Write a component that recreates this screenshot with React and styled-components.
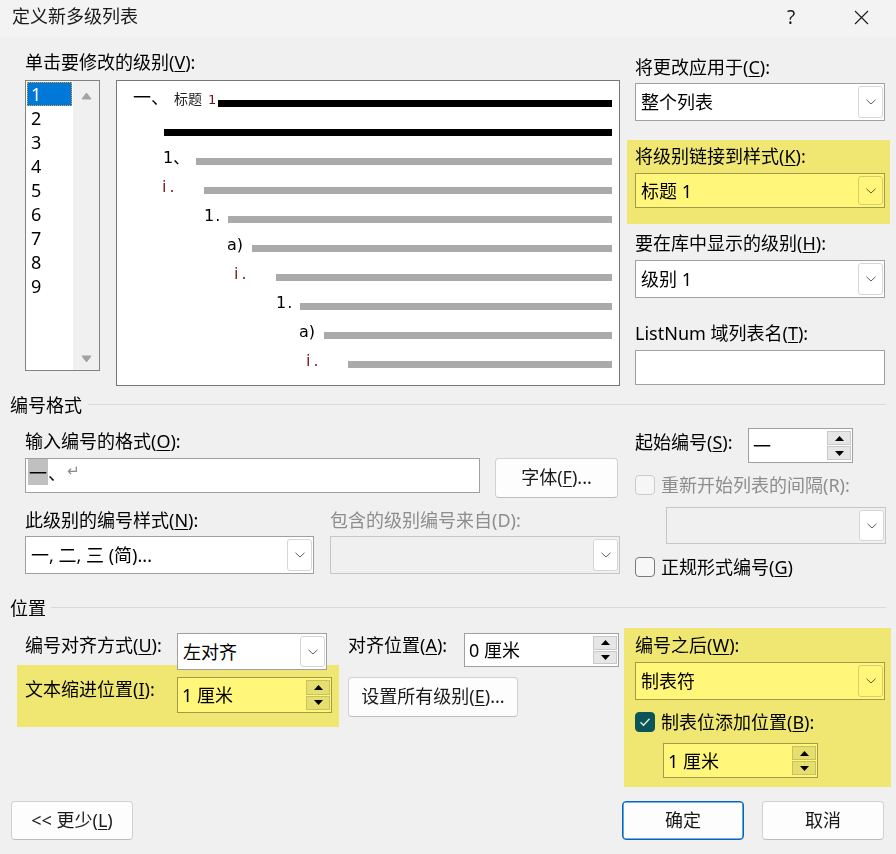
import React from 'react';
import styled, { createGlobalStyle } from 'styled-components';

const FONT = `"Noto Sans", "Noto Sans CJK SC", sans-serif`;

const Global = createGlobalStyle`
  html, body { margin: 0; padding: 0; background: #f0f0f0; }
  body { font-family: ${FONT}; color: #000; }
  * { box-sizing: border-box; }
`;

const Window = styled.div`
  width: 896px;
  height: 854px;
  background: #f0f0f0;
  display: flex;
  flex-direction: column;
  overflow: hidden;
  font-size: 18px;
  line-height: 20px;
`;

const TitleBar = styled.div`
  height: 37px;
  flex: none;
  background: #f3f3f3;
  display: flex;
  align-items: center;
  padding-left: 12px;
`;

const Title = styled.div`
  flex: 1;
  margin-top: -5px;
  color: #1a1a1a;
`;

const TitleBtn = styled.div`
  width: 70px;
  height: 37px;
  display: flex;
  align-items: center;
  justify-content: center;
  color: #1a1a1a;
  font-size: 19px;
  margin-top: -3px;
`;

const Label = styled.div`
  line-height: 20px;
  white-space: nowrap;
  flex: none;
  color: ${p => (p.$muted ? '#8d8d8d' : '#000')};
  margin-top: ${p => p.$mt || 0}px;
  margin-left: ${p => p.$ml || 0}px;
  width: ${p => (p.$w ? p.$w + 'px' : 'auto')};
`;

const U = styled.span`
  text-decoration: underline;
  text-underline-offset: 2px;
  text-decoration-thickness: 1px;
`;

const Top = styled.div`
  display: flex;
  padding: 0 11px 0 25px;
`;

const Col = styled.div`
  display: flex;
  flex-direction: column;
  flex: none;
  width: ${p => p.$w}px;
  margin-left: ${p => p.$ml || 0}px;
  margin-top: ${p => p.$mt || 0}px;
`;

const Row = styled.div`
  display: flex;
  align-items: flex-start;
  margin-top: ${p => p.$mt || 0}px;
  margin-left: ${p => p.$ml || 0}px;
  gap: ${p => p.$gap || 0}px;
`;

/* level list */
const LevelList = styled.div`
  width: 75px;
  height: 291px;
  border: 1px solid #828282;
  background: #fff;
  display: flex;
  flex: none;
`;

const LevelItems = styled.div`
  flex: 1;
  padding: 1px 0 0 1px;
`;

const LevelItem = styled.div`
  width: 45px;
  height: 24px;
  line-height: 24px;
  padding-left: 4px;
  font-size: 18px;
  color: ${p => (p.$sel ? '#fff' : '#000')};
  background: ${p => (p.$sel ? '#0078d7' : 'transparent')};
  outline: ${p => (p.$sel ? '1px dotted #f0a033' : 'none')};
  outline-offset: -1px;
`;

const ScrollBar = styled.div`
  width: 26px;
  background: #f0f0f0;
  display: flex;
  flex-direction: column;
  align-items: center;
  justify-content: space-between;
  padding: 11px 0 7px;
`;

/* preview */
const Preview = styled.div`
  width: 504px;
  height: 306px;
  flex: none;
  border: 1px solid #767676;
  background: #fff;
  padding: 8px 7px 0 0;
`;

const PRow = styled.div`
  height: 29px;
  display: flex;
  align-items: center;
  padding-left: ${p => p.$indent}px;
`;

const Num = styled.span`
  width: ${p => p.$w}px;
  flex: none;
  font-family: "DejaVu Sans", "Noto Sans CJK SC", sans-serif;
  font-size: 16px;
  line-height: 16px;
  letter-spacing: ${p => p.$ls || 0}px;
  color: ${p => (p.$red ? '#7a1a1a' : '#000')};
  margin-bottom: 8px;
  white-space: nowrap;
`;

const HeadNum = styled.span`
  width: 85px;
  flex: none;
  display: flex;
  align-items: baseline;
  margin-bottom: 10px;
  white-space: nowrap;
`;

const HeadMark = styled.span`
  font-family: "Noto Sans CJK SC", sans-serif;
  font-size: 18px;
  line-height: 18px;
`;

const HeadStyle = styled.span`
  font-family: "Noto Sans CJK SC", sans-serif;
  font-size: 14px;
  margin-left: 5px;
  color: #222;
`;

const HeadOne = styled.span`
  font-family: "DejaVu Sans", sans-serif;
  font-size: 13px;
  margin-left: 6px;
  color: #6a1020;
`;

const Bar = styled.div`
  flex: 1;
  height: 7px;
  background: ${p => (p.$dark ? '#000' : '#aaaaaa')};
`;

/* controls */
const ComboBox = styled.div`
  width: ${p => (p.$w ? p.$w + 'px' : '100%')};
  height: ${p => p.$h || 38}px;
  flex: none;
  margin-top: ${p => p.$mt || 0}px;
  margin-left: ${p => p.$ml || 0}px;
  border: 1px solid ${p => (p.$disabled ? '#c6c6c6' : '#a0a0a0')};
  background: ${p => (p.$disabled ? '#f0f0f0' : '#fff')};
  display: flex;
  align-items: center;
  padding: 0 1px 0 5px;
  position: ${p => (p.$raised ? 'relative' : 'static')};
  z-index: ${p => (p.$raised ? 2 : 'auto')};
`;

const FieldText = styled.div`
  flex: 1;
  line-height: 24px;
  white-space: nowrap;
`;

const DropBtn = styled.div`
  width: 25px;
  align-self: stretch;
  margin: 2px 0;
  border: 1px solid #d6d6d6;
  border-radius: 3px;
  background: #fff;
  display: flex;
  align-items: center;
  justify-content: center;
`;

const SpinBox = styled.div`
  width: ${p => p.$w}px;
  height: ${p => p.$h || 35}px;
  flex: none;
  margin-top: ${p => p.$mt || 0}px;
  margin-left: ${p => p.$ml || 0}px;
  border: 1px solid #a0a0a0;
  background: #fff;
  display: flex;
  align-items: center;
  padding: 0 1px 0 4px;
`;

const SpinBtns = styled.div`
  width: 24px;
  align-self: stretch;
  margin: 2px 0;
  display: flex;
  flex-direction: column;
  gap: 1px;
`;

const SpinBtn = styled.div`
  flex: 1;
  background: #e6e6e6;
  border: 1px solid #c8c8c8;
  display: flex;
  align-items: center;
  justify-content: center;
`;

const TextBox = styled.div`
  width: ${p => (p.$w ? p.$w + 'px' : '100%')};
  height: ${p => p.$h || 35}px;
  flex: none;
  margin-top: ${p => p.$mt || 0}px;
  border: 1px solid #a0a0a0;
  background: #fff;
  display: flex;
  align-items: flex-start;
  padding: 0 2px;
`;

const Sel = styled.span`
  background: #c0c0c0;
  line-height: 26px;
  height: 26px;
  padding: 0 1px;
  font-family: "Noto Sans CJK SC", sans-serif;
`;

const Plain = styled.span`
  line-height: 26px;
  font-family: "Noto Sans CJK SC", sans-serif;
`;

const Ret = styled.span`
  line-height: 24px;
  margin-left: 1px;
  color: #8a8a8a;
  font-family: "DejaVu Sans", sans-serif;
  font-size: 15px;
`;

const Btn = styled.div`
  width: ${p => p.$w}px;
  height: ${p => p.$h || 40}px;
  flex: none;
  margin-left: ${p => p.$ml || 0}px;
  margin-top: ${p => p.$mt || 0}px;
  border: 1px solid ${p => (p.$primary ? '#0067c0' : '#d1d1d1')};
  border-bottom-color: ${p => (p.$primary ? '#0067c0' : '#bdbdbd')};
  box-shadow: ${p => (p.$primary ? 'inset 0 0 0 0.6px #0067c0' : 'none')};
  border-radius: 4px;
  background: #fdfdfd;
  display: flex;
  align-items: center;
  justify-content: center;
  color: #1a1a1a;
  white-space: nowrap;
  padding-bottom: 2px;
`;

const CheckRow = styled.div`
  display: flex;
  align-items: center;
  gap: 6px;
  margin-top: ${p => p.$mt || 0}px;
`;

const CheckBox = styled.div`
  width: 20px;
  height: 20px;
  flex: none;
  border-radius: 4px;
  border: 1px solid ${p => (p.$checked ? '#0b5558' : p.$disabled ? '#cbcbcb' : '#7a7a7a')};
  background: ${p => (p.$checked ? '#0b5558' : p.$disabled ? '#f6f6f6' : '#f7f7f7')};
  display: flex;
  align-items: center;
  justify-content: center;
  position: relative;
  z-index: 2;
`;

const SectionHead = styled.div`
  display: flex;
  align-items: center;
  height: 20px;
  padding: 0 10px;
  margin-top: ${p => p.$mt || 0}px;
`;

const Rule = styled.div`
  flex: 1;
  height: 1px;
  background: #dadada;
  margin-left: ${p => p.$gap || 6}px;
  margin-top: -1px;
`;

const Columns = styled.div`
  display: flex;
  align-items: flex-start;
  padding-left: 25px;
`;

const Highlight = styled.div`
  position: relative;
  flex: none;
  width: ${p => (p.$w ? p.$w + 'px' : 'auto')};
  height: ${p => (p.$h ? p.$h + 'px' : 'auto')};
  margin: ${p => p.$m || '0'};
  padding: ${p => p.$p || '0'};
  display: flex;
  flex-direction: ${p => p.$dir || 'column'};
  align-items: flex-start;
  &::after {
    content: '';
    position: absolute;
    inset: 0;
    background: #fff67a;
    mix-blend-mode: multiply;
    pointer-events: none;
  }
`;

const Footer = styled.div`
  display: flex;
  padding: 0 12px 0 11px;
  margin-top: 14px;
`;

const Spacer = styled.div`
  flex: 1;
`;

/* icons */
const Chevron = () => (
  <svg width="10" height="6" viewBox="0 0 10 6">
    <path d="M0.5 0.8 L5 5 L9.5 0.8" fill="none" stroke="#5f5f5f" strokeWidth="1" />
  </svg>
);

const Arrow = ({ down }) => (
  <svg width="9" height="5" viewBox="0 0 9 5">
    <path d={down ? 'M0 0 L9 0 L4.5 5 Z' : 'M4.5 0 L9 5 L0 5 Z'} fill="#000" />
  </svg>
);

const ScrollArrow = ({ down }) => (
  <svg width="11" height="8" viewBox="0 0 11 8">
    <path
      d={down ? 'M1 1 L10 1 L5.5 7 Z' : 'M5.5 1 L10 7 L1 7 Z'}
      fill="#a3a3a3"
      stroke="#a3a3a3"
      strokeWidth="1"
      strokeLinejoin="round"
    />
  </svg>
);

const Combo = ({ text, ...rest }) => (
  <ComboBox {...rest}>
    <FieldText>{text}</FieldText>
    <DropBtn>
      <Chevron />
    </DropBtn>
  </ComboBox>
);

const Spin = ({ text, ...rest }) => (
  <SpinBox {...rest}>
    <FieldText>{text}</FieldText>
    <SpinBtns>
      <SpinBtn>
        <Arrow />
      </SpinBtn>
      <SpinBtn>
        <Arrow down />
      </SpinBtn>
    </SpinBtns>
  </SpinBox>
);

const Check = ({ checked, disabled }) => (
  <CheckBox $checked={checked} $disabled={disabled}>
    {checked && (
      <svg width="12" height="10" viewBox="0 0 12 10">
        <path d="M1.5 5.2 L4.5 8.2 L10.5 1.8" fill="none" stroke="#e8f0d8" strokeWidth="1.3" />
      </svg>
    )}
  </CheckBox>
);

const previewRows = [
  { indent: 47, dark: true },
  { indent: 46, num: '1、', w: 33 },
  { indent: 45, num: 'i.', w: 42, red: true, ls: 3 },
  { indent: 87, num: '1.', w: 24, ls: 1 },
  { indent: 110, num: 'a)', w: 25 },
  { indent: 117, num: 'i.', w: 42, red: true, ls: 3 },
  { indent: 159, num: '1.', w: 24, ls: 1 },
  { indent: 182, num: 'a)', w: 25 },
  { indent: 189, num: 'i.', w: 42, red: true, ls: 3 },
];

export default function App() {
  return (
    <>
      <Global />
      <Window>
        <TitleBar>
          <Title>定义新多级列表</Title>
          <TitleBtn>?</TitleBtn>
          <TitleBtn>
            <svg width="15" height="15" viewBox="0 0 15 15">
              <path d="M1 1 L14 14 M14 1 L1 14" stroke="#1a1a1a" strokeWidth="1.1" />
            </svg>
          </TitleBtn>
        </TitleBar>

        <Top>
          <Col $w={595}>
            <Label $mt={15}>
              单击要修改的级别(<U>V</U>):
            </Label>
            <Row $mt={8} $gap={16}>
              <LevelList>
                <LevelItems>
                  {[1, 2, 3, 4, 5, 6, 7, 8, 9].map(n => (
                    <LevelItem key={n} $sel={n === 1}>
                      {n}
                    </LevelItem>
                  ))}
                </LevelItems>
                <ScrollBar>
                  <ScrollArrow />
                  <ScrollArrow down />
                </ScrollBar>
              </LevelList>
              <Preview>
                <PRow $indent={16}>
                  <HeadNum>
                    <HeadMark>一、</HeadMark>
                    <HeadStyle>标题</HeadStyle>
                    <HeadOne>1</HeadOne>
                  </HeadNum>
                  <Bar $dark />
                </PRow>
                {previewRows.map((r, i) => (
                  <PRow key={i} $indent={r.indent}>
                    {r.num && (
                      <Num $w={r.w} $red={r.red} $ls={r.ls}>
                        {r.num}
                      </Num>
                    )}
                    <Bar $dark={r.dark} />
                  </PRow>
                ))}
              </Preview>
            </Row>
          </Col>

          <Col $w={250} $ml={15}>
            <Label $mt={20}>
              将更改应用于(<U>C</U>):
            </Label>
            <Combo $mt={6} $h={38} text="整个列表" />
            <Highlight $m="19px -5px 0 -8px" $p="6px 5px 16px 8px">
              <Label>
                将级别链接到样式(<U>K</U>):
              </Label>
              <Combo $mt={7} $h={35} $w={250} text="标题 1" />
            </Highlight>
            <Label $mt={9}>
              要在库中显示的级别(<U>H</U>):
            </Label>
            <Combo $mt={7} $h={38} text="级别 1" />
            <Label $mt={25}>
              ListNum 域列表名(<U>T</U>):
            </Label>
            <TextBox $mt={7} $h={35} />
          </Col>
        </Top>

        <SectionHead $mt={9}>
          编号格式
          <Rule />
        </SectionHead>

        <Columns>
          <Col $w={595}>
            <Label $mt={16}>
              输入编号的格式(<U>O</U>):
            </Label>
            <Row $mt={7}>
              <TextBox $w={455} $h={35}>
                <Sel>一</Sel>
                <Plain>、</Plain>
                <Ret>↵</Ret>
              </TextBox>
              <Btn $w={123} $h={40} $ml={15}>
                字体(<U>F</U>)...
              </Btn>
            </Row>
            <Row $mt={12}>
              <Label $w={305}>
                此级别的编号样式(<U>N</U>):
              </Label>
              <Label $muted>包含的级别编号来自(D):</Label>
            </Row>
            <Row $mt={6} $gap={16}>
              <Combo $w={289} $h={38} text="一, 二, 三 (简)..." />
              <Combo $w={290} $h={38} $disabled />
            </Row>
          </Col>
          <Col $w={251} $ml={15}>
            <Row $mt={13}>
              <Label $w={113} $mt={4}>
                起始编号(<U>S</U>):
              </Label>
              <Spin $w={105} $h={35} text="一" />
            </Row>
            <CheckRow $mt={12}>
              <Check disabled />
              <Label $muted>重新开始列表的间隔(R):</Label>
            </CheckRow>
            <Combo $ml={31} $mt={12} $w={220} $h={37} $disabled />
            <CheckRow $mt={13}>
              <Check />
              <Label>
                正规形式编号(<U>G</U>)
              </Label>
            </CheckRow>
          </Col>
        </Columns>

        <SectionHead $mt={21}>
          位置
          <Rule $gap={5} />
        </SectionHead>

        <Columns>
          <Col $w={595} $mt={15}>
            <Row>
              <Label $w={152} $mt={2}>
                编号对齐方式(<U>U</U>):
              </Label>
              <Combo $w={150} $h={37} $raised text="左对齐" />
              <Label $w={116} $ml={21} $mt={2}>
                对齐位置(<U>A</U>):
              </Label>
              <Spin $w={155} $h={34} text="0 厘米" />
            </Row>
            <Row $mt={-5}>
              <Highlight $dir="row" $w={322} $h={62} $m="0 0 0 -8px" $p="12px 0 0 8px">
                <Label $w={152} $mt={2}>
                  文本缩进位置(<U>I</U>):
                </Label>
                <Spin $w={155} $h={36} text="1 厘米" />
              </Highlight>
              <Btn $w={170} $h={40} $ml={9} $mt={12}>
                设置所有级别(<U>E</U>)...
              </Btn>
            </Row>
          </Col>
          <Highlight $w={267} $h={159} $m="10px 0 0 4px" $p="7px 6px 0 11px">
            <Label>
              编号之后(<U>W</U>):
            </Label>
            <Combo $mt={7} $w={250} $h={38} text="制表符" />
            <CheckRow $mt={12}>
              <Check checked />
              <Label>
                制表位添加位置(<U>B</U>):
              </Label>
            </CheckRow>
            <Spin $ml={28} $mt={11} $w={155} $h={35} text="1 厘米" />
          </Highlight>
        </Columns>

        <Footer>
          <Btn $w={122} $h={39}>
            {'<< 更少('}
            <U>L</U>)
          </Btn>
          <Spacer />
          <Btn $w={122} $h={39} $primary>
            确定
          </Btn>
          <Btn $w={122} $h={39} $ml={18}>
            取消
          </Btn>
        </Footer>
      </Window>
    </>
  );
}
